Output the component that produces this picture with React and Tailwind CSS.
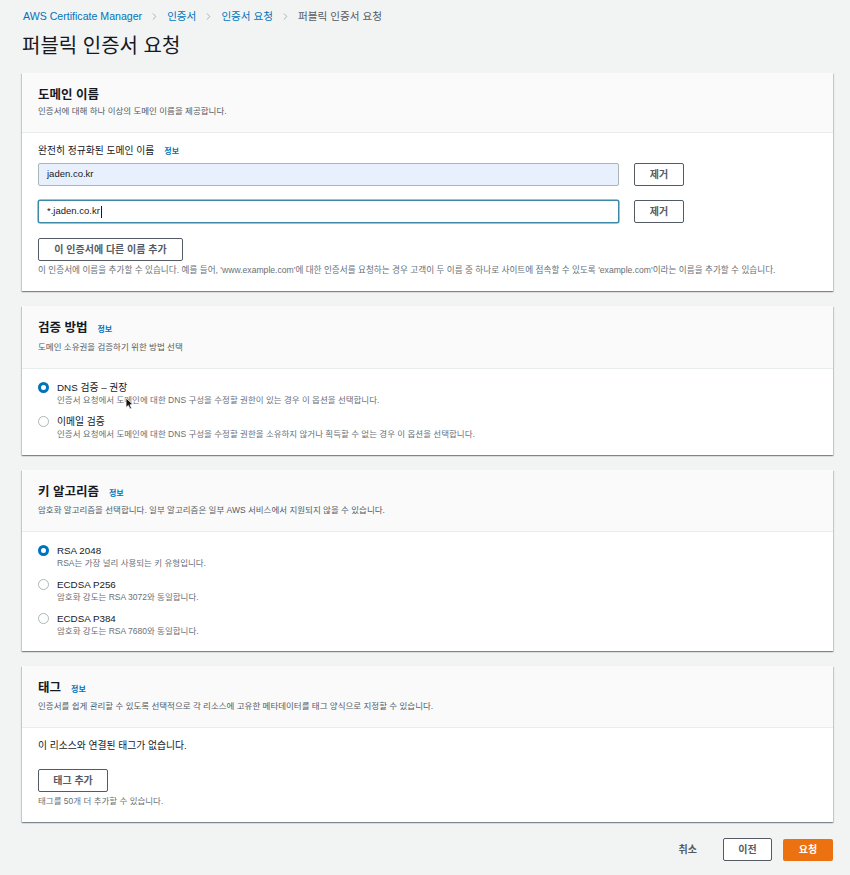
import { ChevronRight } from 'lucide-react'

const FONT = "font-['Liberation_Sans','Noto_Sans_CJK_KR',sans-serif]"

function Info({ className = '' }) {
  return <span className={`text-[8px] leading-none font-bold text-[#0073bb] ${className}`}>정보</span>
}

function Card({ title, info, desc, gap, children }) {
  return (
    <section className="bg-white shadow-[0_1px_1px_0_rgba(0,28,36,0.3),1px_1px_1px_0_rgba(0,28,36,0.15),-1px_1px_1px_0_rgba(0,28,36,0.15)]">
      <div className="bg-[#fafafa] border-b border-[#eaeded] px-4 pt-[15px] pb-[15px]">
        <h2 className="text-[12.5px] leading-[15px] font-bold text-[#16191f]">
          {title}
          {info && <Info className="ml-[10px]" />}
        </h2>
        <p className={`${gap} text-[8.5px] leading-[12px] text-[#545b64]`}>{desc}</p>
      </div>
      {children}
    </section>
  )
}

function Radio({ checked, label, desc, className = '' }) {
  return (
    <div className={`flex ${className}`}>
      <span
        className={`mt-[1px] w-[11px] h-[11px] shrink-0 rounded-full bg-white ${
          checked ? 'border-[3.5px] border-[#0073bb]' : 'border border-[#aab7b8]'
        }`}
      />
      <div className="ml-[8px]">
        <p className="text-[9.8px] leading-[13px] text-[#16191f]">{label}</p>
        <p className="text-[8.5px] leading-[12px] text-[#687078]">{desc}</p>
      </div>
    </div>
  )
}

function Btn({ children, className = '' }) {
  return (
    <button className={`flex shrink-0 items-center justify-center h-[23px] bg-white border border-[#545b64] rounded-[2px] text-[10px] font-bold text-[#545b64] ${className}`}>
      {children}
    </button>
  )
}

export default function App() {
  return (
    <div className={`${FONT} min-h-[875px] bg-[#f2f3f3] pl-[22px] pr-[17px] pt-[10px] pb-[16px] text-[#16191f]`}>
      {/* Breadcrumb */}
      <nav className="flex items-center text-[10.6px] leading-[12px] pl-[1px]">
        <span className="text-[#0073bb]">AWS Certificate Manager</span>
        <ChevronRight size={11} strokeWidth={1.5} className="mx-[7px] text-[#879596]" />
        <span className="text-[#0073bb]">인증서</span>
        <ChevronRight size={11} strokeWidth={1.5} className="mx-[7px] text-[#879596]" />
        <span className="text-[#0073bb]">인증서 요청</span>
        <ChevronRight size={11} strokeWidth={1.5} className="mx-[7px] text-[#879596]" />
        <span className="text-[#545b64]">퍼블릭 인증서 요청</span>
      </nav>

      <h1 className="mt-[12px] text-[20px] leading-[24px] text-[#16191f]">퍼블릭 인증서 요청</h1>

      <div className="mt-[15px] flex flex-col gap-[15px]">
        {/* Domain names */}
        <Card title="도메인 이름" desc="인증서에 대해 하나 이상의 도메인 이름을 제공합니다." gap="mt-[2px]">
          <div className="px-4 pt-[12px] pb-[15px]">
            <p className="text-[9.8px] leading-[12px] text-[#16191f]">
              완전히 정규화된 도메인 이름
              <Info className="ml-[10px]" />
            </p>
            <div className="mt-[6px] flex items-center gap-[15px]">
              <div className="w-[581px] h-[23px] bg-[#e8f0fe] border border-[#aab7b8] rounded-[2px] px-[8px] flex items-center text-[9.5px]">
                jaden.co.kr
              </div>
              <Btn className="w-[50px]">제거</Btn>
            </div>
            <div className="mt-[14px] flex items-center gap-[15px]">
              <div className="w-[581px] h-[23px] bg-white border border-[#3d88a8] shadow-[0_0_0_0.5px_#3d88a8] rounded-[2px] px-[8px] flex items-center text-[9.5px]">
                *.jaden.co.kr
                <span className="ml-[1px] w-px h-[12px] bg-[#16191f]" />
              </div>
              <Btn className="w-[50px]">제거</Btn>
            </div>
            <Btn className="mt-[15px] w-[145px] h-[22px]">이 인증서에 다른 이름 추가</Btn>
            <p className="mt-[3px] text-[8.62px] leading-[12px] text-[#687078] whitespace-nowrap">
              이 인증서에 이름을 추가할 수 있습니다. 예를 들어, 'www.example.com'에 대한 인증서를 요청하는 경우 고객이 두 이름 중 하나로 사이트에 접속할 수 있도록 'example.com'이라는 이름을 추가할 수 있습니다.
            </p>
          </div>
        </Card>

        {/* Validation method */}
        <Card title="검증 방법" info desc="도메인 소유권을 검증하기 위한 방법 선택" gap="mt-[5px]">
          <div className="relative px-4 pt-[12px] pb-[15px]">
            <Radio checked label="DNS 검증 – 권장" desc="인증서 요청에서 도메인에 대한 DNS 구성을 수정할 권한이 있는 경우 이 옵션을 선택합니다." />
            <Radio className="mt-[9px]" label="이메일 검증" desc="인증서 요청에서 도메인에 대한 DNS 구성을 수정할 권한을 소유하지 않거나 획득할 수 없는 경우 이 옵션을 선택합니다." />
            <svg className="absolute left-[103px] top-[28px]" width="9" height="13" viewBox="0 0 9 13">
              <path d="M1 1 L1 10.5 L3.3 8.4 L5 12 L6.6 11.3 L5 7.8 L8 7.6 Z" fill="#111" stroke="#fff" strokeWidth="0.8" strokeLinejoin="round" />
            </svg>
          </div>
        </Card>

        {/* Key algorithm */}
        <Card title="키 알고리즘" info desc="암호화 알고리즘을 선택합니다. 일부 알고리즘은 일부 AWS 서비스에서 지원되지 않을 수 있습니다." gap="mt-[4px]">
          <div className="px-4 pt-[12px] pb-[14px]">
            <Radio checked label="RSA 2048" desc="RSA는 가장 널리 사용되는 키 유형입니다." />
            <Radio className="mt-[9px]" label="ECDSA P256" desc="암호화 강도는 RSA 3072와 동일합니다." />
            <Radio className="mt-[9px]" label="ECDSA P384" desc="암호화 강도는 RSA 7680와 동일합니다." />
          </div>
        </Card>

        {/* Tags */}
        <Card title="태그" info desc="인증서를 쉽게 관리할 수 있도록 선택적으로 각 리소스에 고유한 메타데이터를 태그 양식으로 지정할 수 있습니다." gap="mt-[4px]">
          <div className="px-4 pt-[11px] pb-[15px]">
            <p className="text-[9.8px] leading-[13px] text-[#16191f]">이 리소스와 연결된 태그가 없습니다.</p>
            <Btn className="mt-[17px] w-[70px] h-[22px]">태그 추가</Btn>
            <p className="mt-[3px] text-[8.5px] leading-[12px] text-[#687078]">태그를 50개 더 추가할 수 있습니다.</p>
          </div>
        </Card>
      </div>

      {/* Footer actions */}
      <div className="mt-[16px] flex items-center justify-end">
        <span className="mr-[26px] text-[10px] font-bold text-[#545b64]">취소</span>
        <Btn className="w-[49px] h-[22px]">이전</Btn>
        <button className="ml-[11px] w-[50px] h-[22px] bg-[#ec7211] rounded-[2px] text-[10px] font-bold text-white">요청</button>
      </div>
    </div>
  )
}
